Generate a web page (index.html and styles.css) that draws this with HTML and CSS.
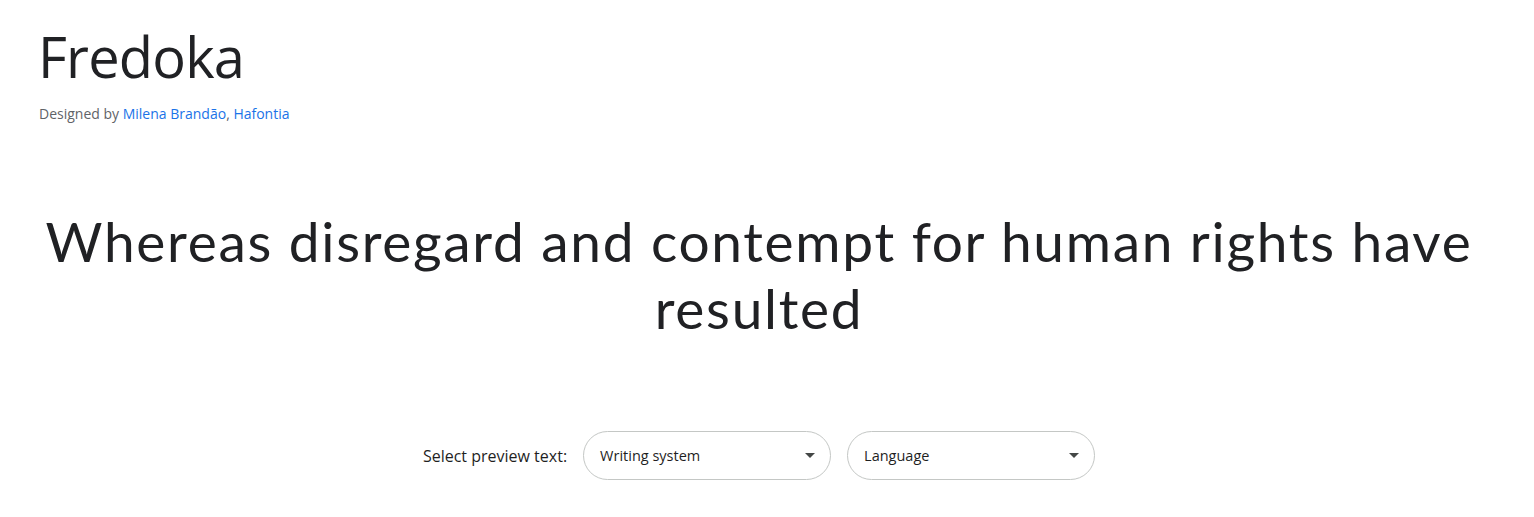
FILE: index.html
```html
<!DOCTYPE html>
<html lang="en">
<head>
<meta charset="utf-8">
<title>Fredoka</title>
<link rel="stylesheet" href="styles.css">
</head>
<body>
<div class="page">
  <header class="header">
    <h1 class="title">Fredoka</h1>
    <p class="designers">Designed by <a href="#" class="link">Milena Brandão</a>, <a href="#" class="link">Hafontia</a></p>
  </header>
  <section class="preview">
    <p class="preview-text">Whereas disregard and contempt for human rights have resulted</p>
  </section>
  <div class="select-row">
    <span class="select-label">Select preview text:</span>
    <div class="select">
      <span class="select-value">Writing system</span>
      <svg class="arrow" width="10" height="5" viewBox="0 0 10 5"><path d="M0 0L5 5L10 0Z" fill="#444746"/></svg>
    </div>
    <div class="select">
      <span class="select-value">Language</span>
      <svg class="arrow" width="10" height="5" viewBox="0 0 10 5"><path d="M0 0L5 5L10 0Z" fill="#444746"/></svg>
    </div>
  </div>
</div>
</body>
</html>
```
FILE: styles.css
```css
html, body {
  margin: 0;
  padding: 0;
  background: #ffffff;
}
body {
  font-family: "Open Sans", Roboto, Arial, sans-serif;
  color: #1f1f1f;
}
.page {
  width: 1518px;
}
.header {
  padding: 20px 0 0 38px;
}
.title {
  margin: 0;
  font-family: "Open Sans", Roboto, sans-serif;
  font-weight: 400;
  font-size: 56px;
  line-height: 72px;
  color: #202124;
  letter-spacing: -0.8px;
}
.designers {
  margin: 12px 0 0 1px;
  font-size: 14px;
  line-height: 20px;
  color: #5f6368;
}
.link {
  color: #1a73e8;
  text-decoration: none;
}
.preview {
  padding: 84px 10px 0 10px;
  display: flex;
  justify-content: center;
}
.preview-text {
  margin: 0;
  text-align: center;
  font-family: Lato, sans-serif;
  font-size: 55px;
  line-height: 67px;
  letter-spacing: 1.7px;
  color: #202124;
  max-width: 1480px;
}
.select-row {
  margin-top: 89px;
  display: flex;
  justify-content: center;
  align-items: center;
  gap: 16px;
}
.select-label {
  font-size: 16px;
  color: #1f1f1f;
}
.select {
  box-sizing: border-box;
  width: 248px;
  height: 49px;
  border: 1px solid #c4c7c5;
  border-radius: 25px;
  padding: 0 15px 0 16px;
  display: flex;
  align-items: center;
  justify-content: space-between;
}
.select-value {
  font-size: 14.5px;
  color: #1f1f1f;
}
.arrow {
  display: block;
}
```
